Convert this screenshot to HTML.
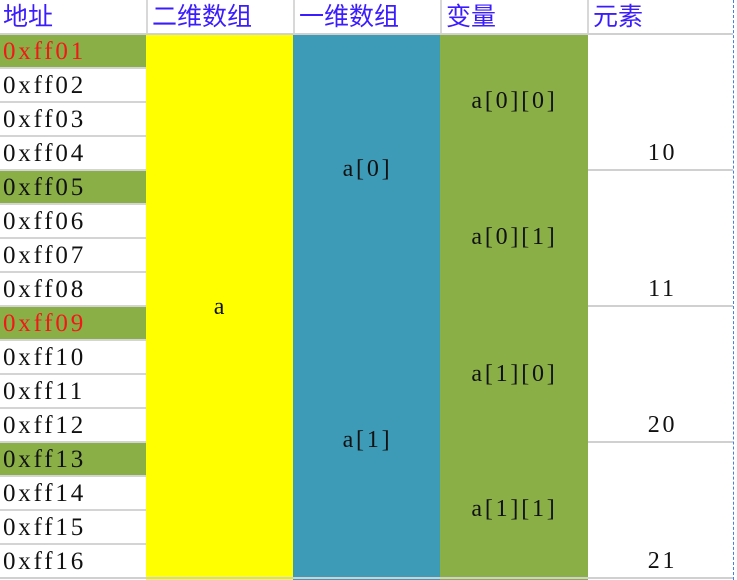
<!DOCTYPE html>
<html><head><meta charset="utf-8"><style>
body{margin:0;width:737px;height:580px;background:#fff;position:relative;overflow:hidden;font-family:"Liberation Serif","Noto Serif CJK SC",serif;}
div{position:absolute;box-sizing:border-box;}
.h{top:0;height:34px;color:#3a1cff;font-family:"Liberation Sans","Noto Sans CJK SC",sans-serif;font-size:25px;line-height:34px;padding-left:4px;border-left:2px solid #d8d8d8;white-space:nowrap;}
.r{left:0;width:146px;height:34px;font-size:25px;letter-spacing:2.8px;line-height:34px;padding-left:3px;color:#111;border-bottom:2px solid #d4d4d4;white-space:nowrap;}
.g{background:#8aaf47;}
.red{color:#f21818;}
.t{font-size:24px;letter-spacing:2.8px;color:#111;text-align:center;width:146px;padding-left:3px;white-space:nowrap;}
</style></head><body>
<div class="h" style="left:0;width:146px;border-left:none;padding-left:3px">地址</div>
<div class="h" style="left:146px;width:147px">二维数组</div>
<div class="h" style="left:293px;width:147px">一维数组</div>
<div class="h" style="left:440px;width:147px">变量</div>
<div class="h" style="left:587px;width:146px">元素</div>
<div style="left:0;top:33px;width:733px;height:2px;background:#d0d0d0"></div>

<div class="r g red" style="top:35px">0xff01</div>
<div class="r" style="top:69px">0xff02</div>
<div class="r" style="top:103px">0xff03</div>
<div class="r" style="top:137px">0xff04</div>
<div class="r g" style="top:171px">0xff05</div>
<div class="r" style="top:205px">0xff06</div>
<div class="r" style="top:239px">0xff07</div>
<div class="r" style="top:273px">0xff08</div>
<div class="r g red" style="top:307px">0xff09</div>
<div class="r" style="top:341px">0xff10</div>
<div class="r" style="top:375px">0xff11</div>
<div class="r" style="top:409px">0xff12</div>
<div class="r g" style="top:443px">0xff13</div>
<div class="r" style="top:477px">0xff14</div>
<div class="r" style="top:511px">0xff15</div>
<div class="r" style="top:545px">0xff16</div>

<div style="left:146px;top:35px;width:147px;height:545px;background:#ffff00"></div>
<div style="left:293px;top:35px;width:147px;height:545px;background:#3e9bb8"></div>
<div style="left:440px;top:35px;width:148px;height:545px;background:#8aaf47"></div>

<div class="t" style="left:146px;top:294px">a</div>
<div class="t" style="left:293px;top:156px">a[0]</div>
<div class="t" style="left:293px;top:427px">a[1]</div>
<div class="t" style="left:440px;top:88px">a[0][0]</div>
<div class="t" style="left:440px;top:224px">a[0][1]</div>
<div class="t" style="left:440px;top:361px">a[1][0]</div>
<div class="t" style="left:440px;top:496px">a[1][1]</div>

<div class="t" style="left:588px;top:140px">10</div>
<div class="t" style="left:588px;top:276px">11</div>
<div class="t" style="left:588px;top:412px">20</div>
<div class="t" style="left:588px;top:548px">21</div>
<div style="left:588px;top:169px;width:145px;height:2px;background:#d0d0d0"></div>
<div style="left:588px;top:305px;width:145px;height:2px;background:#d0d0d0"></div>
<div style="left:588px;top:441px;width:145px;height:2px;background:#d0d0d0"></div>
<div style="left:0;top:577px;width:733px;height:2px;background:#d0d0d0"></div>
<div style="left:733px;top:0;width:0;height:580px;border-left:1px dashed #4a7de0"></div>
</body></html>
